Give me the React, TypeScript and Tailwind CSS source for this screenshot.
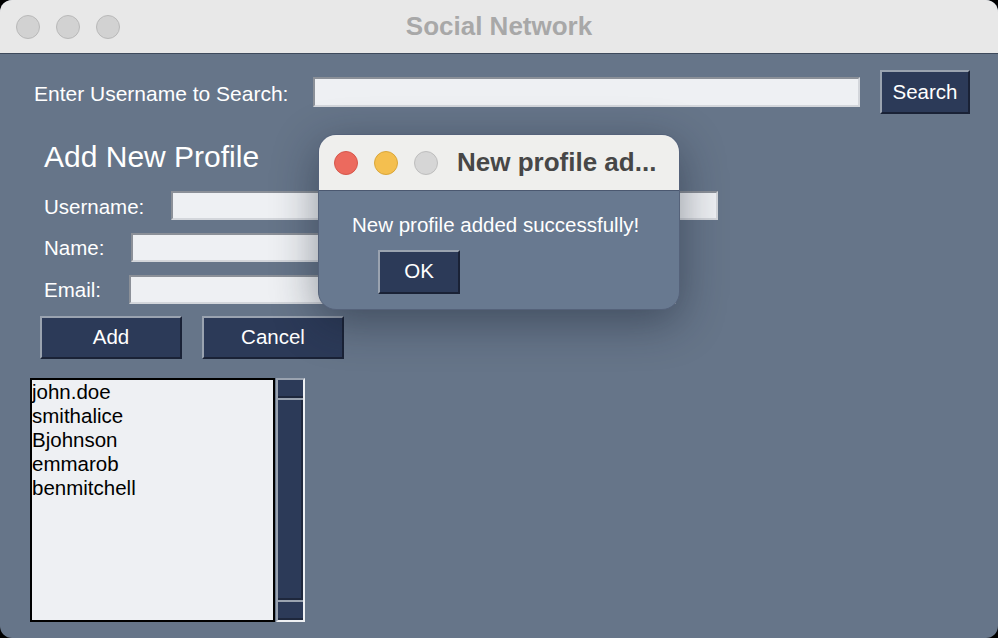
const font = "font-['Liberation_Sans','Helvetica','Arial',sans-serif]";

const btn =
  "flex items-center justify-center bg-[#2c3a58] text-white border-2 border-t-[#9aa3b0] border-l-[#9aa3b0] border-b-[#1a2236] border-r-[#1a2236]";

const entry =
  "w-[547px] bg-[#eef0f3] border-2 border-t-[#8b9098] border-l-[#8b9098] border-b-[#d3d6db] border-r-[#d3d6db]";

function Light({ color, ring }: { color: string; ring: string }) {
  return <span className={`h-6 w-6 rounded-full border ${color} ${ring}`} />;
}

const profiles = ["john.doe", "smithalice", "Bjohnson", "emmarob", "benmitchell"];

export default function App() {
  return (
    <div className={`h-[638px] w-[998px] bg-black ${font}`}>
      <div className="relative flex h-full w-full flex-col overflow-hidden rounded-[12px] bg-[#667589]">
        {/* title bar */}
        <div className="relative flex h-[54px] shrink-0 items-center border-b border-[#3e4a5c] bg-[#e8e8e8] px-4">
          <div className="flex gap-4">
            <Light color="bg-[#d2d2d2]" ring="border-[#b9b9b9]" />
            <Light color="bg-[#d2d2d2]" ring="border-[#b9b9b9]" />
            <Light color="bg-[#d2d2d2]" ring="border-[#b9b9b9]" />
          </div>
          <span className="absolute inset-x-0 text-center text-[26px] font-bold text-[#a8a8a8]">Social Network</span>
        </div>

        {/* search row */}
        <div className="mt-[16px] flex h-[44px] items-center pl-[34px]">
          <span className="mt-[3px] w-[279px] text-[21px] text-white">Enter Username to Search:</span>
          <div className={`${entry} h-[30px]`} />
          <button className={`${btn} ml-[20px] h-[44px] w-[90px] text-[20.5px]`}>Search</button>
        </div>

        {/* add profile */}
        <div className="mt-[26px] pl-[44px] text-[30px] leading-[34px] text-white">Add New Profile</div>

        <div className="mt-[17px] flex flex-col gap-[13px] pl-[44px] text-[20.5px] text-white">
          <div className="flex h-[29px] items-center">
            <span className="mt-[3px] w-[127px]">Username:</span>
            <div className={`${entry} h-[29px]`} />
          </div>
          <div className="flex h-[29px] items-center">
            <span className="mt-[2px] w-[87px]">Name:</span>
            <div className={`${entry} h-[29px]`} />
          </div>
          <div className="flex h-[29px] items-center">
            <span className="mt-[2px] w-[85px]">Email:</span>
            <div className={`${entry} h-[29px]`} />
          </div>
        </div>

        <div className="mt-[12px] flex gap-[20px] pl-[40px] text-[20.5px]">
          <button className={`${btn} h-[43px] w-[142px]`}>Add</button>
          <button className={`${btn} h-[43px] w-[142px]`}>Cancel</button>
        </div>

        {/* listbox */}
        <div className="mt-[19px] flex pl-[30px]">
          <div className="h-[244px] w-[245px] border-2 border-black bg-[#eef0f3] text-[20.5px] leading-[24px] text-black">
            {profiles.map((p) => (
              <div key={p}>{p}</div>
            ))}
          </div>
          <div className="ml-px flex h-[244px] w-[29px] flex-col border-2 border-t-[#9aa3b0] border-l-[#9aa3b0] border-b-[#eef0f3] border-r-[#eef0f3] bg-[#9aa3b0]">
            <div className="h-[18px] border-b-2 border-b-[#1e273c] bg-[#2c3a58]" />
            <div className="mt-[2px] flex-1 border-b-2 border-r-2 border-[#1e273c] bg-[#2c3a58]" />
            <div className="mt-[2px] h-[18px] border-b-2 border-b-[#1e273c] bg-[#2c3a58]" />
          </div>
        </div>

        {/* dialog */}
        <div className="absolute left-[318px] top-[134px] flex h-[176px] w-[362px] flex-col overflow-hidden rounded-[18px] border border-[#55627a] bg-[#687990] shadow-[0_12px_45px_rgba(20,28,45,0.45)]">
          <div className="flex h-[56px] shrink-0 items-center border-b border-[#4b5870] bg-[#efefed] pl-[15px]">
            <div className="flex gap-4">
              <Light color="bg-[#ec6a5e]" ring="border-[#d5574b]" />
              <Light color="bg-[#f4bf4f]" ring="border-[#d9a63a]" />
              <Light color="bg-[#d6d6d6]" ring="border-[#bdbdbd]" />
            </div>
            <span className="ml-[19px] whitespace-nowrap text-[26px] font-bold text-[#474747]">New profile ad...</span>
          </div>
          <div className="mt-[19px] pl-[33px] text-[20.5px] text-white">New profile added successfully!</div>
          <button className={`${btn} ml-[59px] mt-[9px] h-[44px] w-[82px] text-[20.5px]`}>OK</button>
        </div>
      </div>
    </div>
  );
}
